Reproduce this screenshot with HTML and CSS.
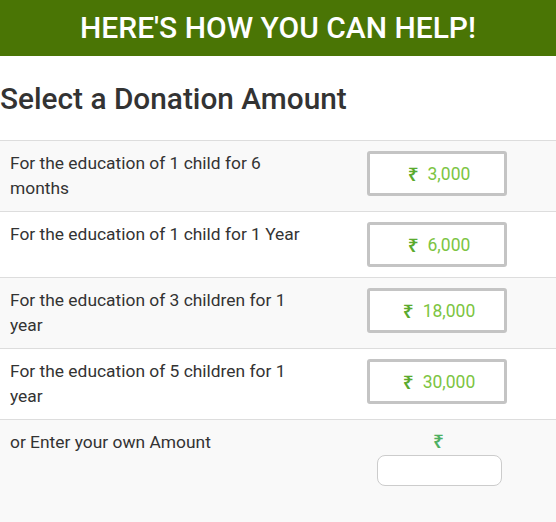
FILE: index.html
```html
<!DOCTYPE html>
<html>
<head>
<meta charset="utf-8">
<link rel="stylesheet" href="styles.css">
</head>
<body>
<div class="banner"><h1>HERE'S HOW YOU CAN HELP!</h1></div>
<h2 class="title">Select a Donation Amount</h2>
<div class="table">
  <div class="row alt">
    <div class="desc">For the education of 1 child for 6 months</div>
    <div class="amt"><button class="btn"><span class="rs">₹</span>3,000</button></div>
  </div>
  <div class="row">
    <div class="desc">For the education of 1 child for 1 Year</div>
    <div class="amt"><button class="btn"><span class="rs">₹</span>6,000</button></div>
  </div>
  <div class="row alt">
    <div class="desc">For the education of 3 children for 1 year</div>
    <div class="amt"><button class="btn"><span class="rs">₹</span>18,000</button></div>
  </div>
  <div class="row">
    <div class="desc">For the education of 5 children for 1 year</div>
    <div class="amt"><button class="btn"><span class="rs">₹</span>30,000</button></div>
  </div>
  <div class="row alt last">
    <div class="desc">or Enter your own Amount</div>
    <div class="amt custom">
      <span class="rs big">₹</span>
      <input class="own" type="text">
    </div>
  </div>
</div>
</body>
</html>
```

FILE: styles.css
```css
* { box-sizing: border-box; }
body {
  margin: 0;
  font-family: Roboto, "Noto Sans", sans-serif;
  color: #333;
  background: #fff;
}
.banner {
  background: #4a7505;
  height: 56px;
  display: flex;
  align-items: center;
  justify-content: center;
}
.banner h1 {
  margin: 0;
  color: #fff;
  font-size: 30px;
  font-weight: 500;
  line-height: 1;
}
.title {
  margin: 0;
  padding: 25px 0 24px 0;
  font-size: 29.8px;
  font-weight: 500;
  line-height: 35px;
  color: #333;
}
.table {
  border-top: 1px solid #ddd;
}
.row {
  display: flex;
  border-bottom: 1px solid #ddd;
  background: #fff;
}
.row.alt { background: #f9f9f9; }
.row.last { border-bottom: none; height: 110px; }
.desc {
  width: 318px;
  padding: 10px 4px 10px 10px;
  font-size: 17.4px;
  line-height: 25px;
}
.amt {
  flex: 1;
  padding: 10px 0;
  display: flex;
  justify-content: center;
}
.btn {
  width: 140px;
  height: 45px;
  border: 3px solid #c4c4c4;
  border-radius: 3px;
  background: #fff;
  color: #7cc442;
  font-family: Roboto, sans-serif;
  font-size: 17.5px;
  display: flex;
  align-items: center;
  justify-content: center;
  padding: 0 0 0 4px;
}
.rs {
  color: #5aaa2e;
  font-family: "Noto Sans", "DejaVu Sans", sans-serif;
  font-weight: 600;
  font-size: 19px;
  margin-right: 9px;
}
.custom {
  flex-direction: column;
  justify-content: flex-start;
  align-items: center;
  padding-top: 10px;
}
.rs.big {
  margin: 0 0 3px 3px;
  font-size: 19px;
  line-height: 22px;
  color: #4fb062;
}
.own {
  width: 125px;
  height: 31px;
  margin-left: 4px;
  border: 1px solid #ccc;
  border-radius: 8px;
  background: #fff;
}
```
